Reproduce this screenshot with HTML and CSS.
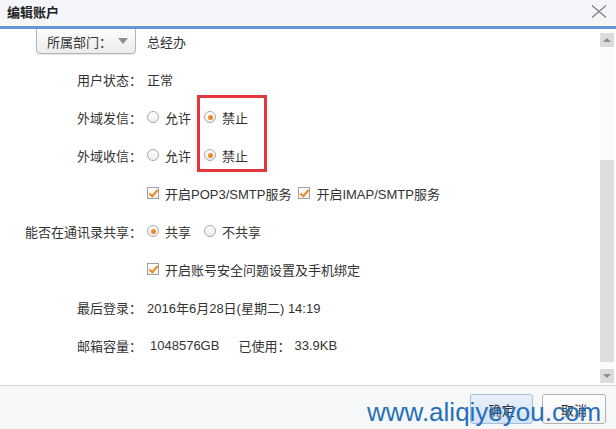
FILE: index.html
```html
<!DOCTYPE html>
<html lang="zh-CN">
<head>
    <meta charset="UTF-8">
    <meta name="viewport" content="width=device-width, initial-scale=1.0">
    <title>编辑账户</title>
    <link rel="stylesheet" href="styles.css">
</head>
<body>
    <div class="dialog">
        <div class="titlebar">
            <span class="title">编辑账户</span>
            <svg class="close" width="16" height="13" viewBox="0 0 16 13">
                <path d="M1 0.5 L15 12.5 M15 0.5 L1 12.5" stroke="#7a7a7a" stroke-width="1.1" fill="none"/>
            </svg>
        </div>

        <div class="body">
            <div class="scroll">
                <div class="form">
                    <div class="row">
                        <div class="label">
                            <span class="dept-btn">所属部门：<span class="arrow"></span></span>
                        </div>
                        <div class="value">总经办</div>
                    </div>
                    <div class="row">
                        <div class="label">用户状态：</div>
                        <div class="value">正常</div>
                    </div>
                    <div class="row">
                        <div class="label">外域发信：</div>
                        <div class="value">
                            <span class="opt"><i class="radio"></i>允许</span>
                            <span class="opt"><i class="radio on"></i>禁止</span>
                        </div>
                    </div>
                    <div class="row">
                        <div class="label">外域收信：</div>
                        <div class="value">
                            <span class="opt"><i class="radio"></i>允许</span>
                            <span class="opt"><i class="radio on"></i>禁止</span>
                        </div>
                    </div>
                    <div class="row">
                        <div class="label"></div>
                        <div class="value">
                            <span class="opt wide"><i class="check"></i>开启POP3/SMTP服务</span>
                            <span class="opt"><i class="check"></i>开启IMAP/SMTP服务</span>
                        </div>
                    </div>
                    <div class="row">
                        <div class="label">能否在通讯录共享：</div>
                        <div class="value">
                            <span class="opt"><i class="radio on"></i>共享</span>
                            <span class="opt"><i class="radio"></i>不共享</span>
                        </div>
                    </div>
                    <div class="row">
                        <div class="label"></div>
                        <div class="value">
                            <span class="opt"><i class="check"></i>开启账号安全问题设置及手机绑定</span>
                        </div>
                    </div>
                    <div class="row">
                        <div class="label">最后登录：</div>
                        <div class="value">2016年6月28日(星期二) 14:19</div>
                    </div>
                    <div class="row">
                        <div class="label">邮箱容量：</div>
                        <div class="value">
                            <span class="size">1048576GB</span>
                            <span class="used">已使用：</span>
                            <span>33.9KB</span>
                        </div>
                    </div>
                </div>
            </div>
            <div class="scrollbar">
                <div class="sb-btn"><span class="up"></span></div>
                <div class="sb-track"><div class="sb-thumb"></div></div>
                <div class="sb-btn"><span class="down"></span></div>
            </div>
            <!-- 标注框 -->
            <div class="mark"></div>
        </div>

        <div class="footer">
            <button class="btn ok">确定</button>
            <button class="btn">取消</button>
        </div>

        <div class="watermark">www.aliqiyeyou.com</div>
    </div>
</body>
</html>
```

FILE: styles.css
```css
* {
    margin: 0;
    padding: 0;
    box-sizing: border-box;
}
body {
    font-family: "Liberation Sans", "Noto Sans CJK SC", sans-serif;
    font-size: 13px;
    color: #333;
    background: #fff;
}
.dialog {
    position: relative;
    width: 616px;
    height: 429px;
    display: flex;
    flex-direction: column;
    overflow: hidden;
}
.titlebar {
    height: 29px;
    flex: none;
    display: flex;
    align-items: center;
    justify-content: space-between;
    padding: 0 9px 4px 7px;
    background: linear-gradient(#f3f5f8 0, #f4f6f9 80%, #fcf8f4 100%);
    border-bottom: 3px solid #6596d8;
}
.title {
    font-weight: bold;
    font-size: 13px;
    color: #222;
}
.close {
    display: block;
}
.body {
    position: relative;
    flex: 1;
    display: flex;
    min-height: 0;
}
.scroll {
    flex: 1;
    overflow: hidden;
}
.form {
    margin-top: -7px;
}
.row {
    height: 38px;
    display: flex;
    align-items: center;
}
.label {
    width: 142px;
    flex: none;
    text-align: right;
    white-space: nowrap;
}
.value {
    padding-left: 5px;
    display: flex;
    align-items: center;
    white-space: nowrap;
}
.dept-btn {
    display: inline-flex;
    align-items: center;
    width: 100px;
    height: 30px;
    margin: -4px 6px 0 0;
    padding: 4px 0 0 10px;
    border: 1px solid #b4b4b4;
    border-radius: 0 0 4px 4px;
    background: linear-gradient(#fff, #ececec);
    box-shadow: 0 1px 1px rgba(0,0,0,0.1);
    text-align: left;
}
.arrow {
    margin-left: 6px;
    width: 0;
    height: 0;
    border-left: 5px solid transparent;
    border-right: 5px solid transparent;
    border-top: 6px solid #8a8f98;
}
.opt {
    display: inline-flex;
    align-items: center;
    margin-right: 13px;
}
.opt.wide {
    margin-right: 7px;
}
.radio {
    width: 12px;
    height: 12px;
    margin-right: 6px;
    border: 1px solid #a8a8a8;
    border-radius: 50%;
    background: linear-gradient(#fff, #ededed);
    display: inline-flex;
    align-items: center;
    justify-content: center;
}
.radio.on::after {
    content: "";
    width: 5px;
    height: 5px;
    border-radius: 50%;
    background: #f0892a;
}
.check {
    position: relative;
    width: 12px;
    height: 12px;
    margin-right: 6px;
    border: 1px solid #a0a0a0;
    background: linear-gradient(#fff, #efefef);
}
.check::after {
    content: "";
    position: absolute;
    left: 3px;
    top: 0;
    width: 3px;
    height: 7px;
    border-right: 2px solid #e8891f;
    border-bottom: 2px solid #e8891f;
    transform: rotate(40deg);
}
.size {
    margin-left: 3px;
    margin-right: 19px;
}
.used {
    margin-right: 4px;
}
.scrollbar {
    width: 14px;
    flex: none;
    margin: 4px 2px 2px 0;
    display: flex;
    flex-direction: column;
}
.sb-btn {
    height: 14px;
    background: #dcdcdc;
    display: flex;
    align-items: center;
    justify-content: center;
}
.up, .down {
    width: 0;
    height: 0;
    border-left: 4px solid transparent;
    border-right: 4px solid transparent;
}
.up {
    border-bottom: 4px solid #8d8d8d;
}
.down {
    border-top: 4px solid #8d8d8d;
}
.sb-track {
    flex: 1;
    padding: 113px 0 4px;
    background: #fbfbfb;
}
.sb-thumb {
    height: 202px;
    background: #dddddd;
}
.mark {
    position: absolute;
    left: 197px;
    top: 66px;
    width: 70px;
    height: 77px;
    border: 3px solid #e4363b;
}
.footer {
    height: 44px;
    flex: none;
    border-top: 1px solid #d6d6d6;
    background: #f6f7f9;
    display: flex;
    justify-content: flex-end;
    align-items: flex-start;
    padding: 8px 10px 0 0;
    gap: 9px;
}
.btn {
    width: 64px;
    height: 30px;
    font-family: "Liberation Sans", "Noto Sans CJK SC", sans-serif;
    font-size: 13px;
    color: #333;
    border: 1px solid #b2b2b2;
    border-radius: 3px;
    background: linear-gradient(#fff, #f3f3f3);
}
.btn.ok {
    width: 63px;
    border-color: #a6bedd;
    background: linear-gradient(#e8f0fb, #d4e2f6);
}
.watermark {
    position: absolute;
    left: 367px;
    top: 399px;
    font-family: "Liberation Sans", Arial, sans-serif;
    font-size: 26px;
    line-height: 26px;
    color: #2670b8;
    white-space: nowrap;
}
```
